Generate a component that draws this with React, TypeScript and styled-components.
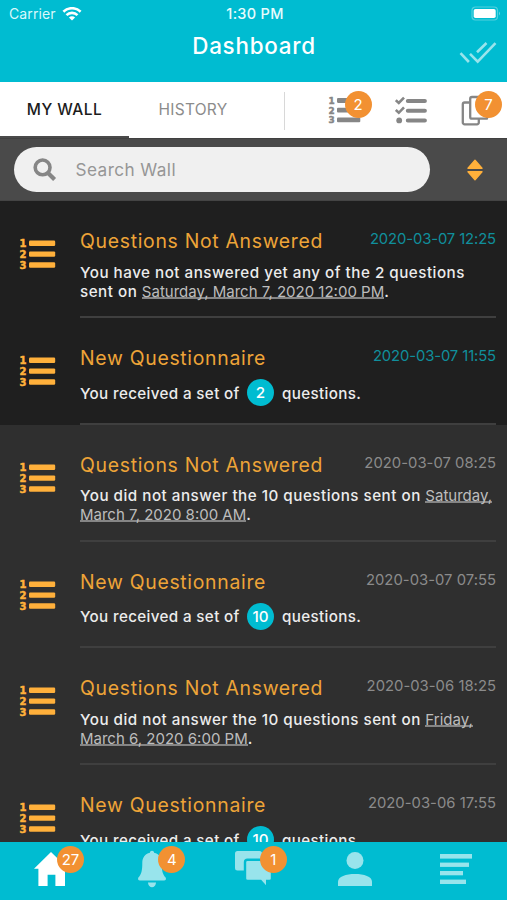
import React from "react";
import styled, { createGlobalStyle } from "styled-components";

const CYAN = "#00bcd1";
const AMBER = "#ffb03b";
const PALE = "#98e4ec";

const GlobalStyle = createGlobalStyle`
  * { box-sizing: border-box; }
  body { margin: 0; background: #2f2f2f; font-family: Inter, "Liberation Sans", sans-serif; }
`;

const Screen = styled.div`
  width: 507px;
  height: 900px;
  display: flex;
  flex-direction: column;
  overflow: hidden;
  background: #2f2f2f;
`;

const Header = styled.header`
  height: 82px;
  flex: none;
  background: ${CYAN};
  color: #fff;
`;

const StatusBar = styled.div`
  height: 27px;
  display: grid;
  grid-template-columns: 1fr auto 1fr;
  align-items: center;
  padding: 0 6px 0 9px;
`;

const Carrier = styled.div`
  display: flex;
  align-items: center;
  gap: 6px;
  font-size: 14px;
  letter-spacing: 0.1px;
  color: #d9f8fb;
`;

const Clock = styled.div`
  font-size: 14.5px;
  font-weight: 500;
  letter-spacing: 0.3px;
  color: #e8fbfd;
`;

const BatterySlot = styled.div`
  display: flex;
  justify-content: flex-end;
`;

const TitleBar = styled.div`
  height: 55px;
  display: grid;
  grid-template-columns: 1fr auto 1fr;
  padding: 0 10px;
`;

const Title = styled.h1`
  grid-column: 2;
  margin: 4px 0 0 1px;
  font-size: 22.4px;
  line-height: 30px;
  font-weight: 500;
  letter-spacing: 0.75px;
`;

const ReadAll = styled.div`
  justify-self: end;
  padding-top: 14px;
`;

const Tabs = styled.nav`
  height: 56px;
  flex: none;
  display: flex;
  align-items: stretch;
  background: #fff;
`;

const Tab = styled.div<{ $active?: boolean }>`
  width: ${(p) => (p.$active ? 129 : 128)}px;
  display: flex;
  align-items: center;
  justify-content: center;
  border-bottom: 2px solid ${(p) => (p.$active ? "#4a4a4a" : "transparent")};
  padding-top: 1px;
  font-size: 15.5px;
  font-weight: ${(p) => (p.$active ? 500 : 400)};
  letter-spacing: ${(p) => (p.$active ? 0.45 : 0.25)}px;
  color: ${(p) => (p.$active ? "#1c1c1c" : "#8c8c8c")};
`;

const TabDivider = styled.div`
  width: 1px;
  height: 38px;
  margin: 10px 44px 0 27px;
  background: #d8d8d8;
`;

const Filters = styled.div`
  display: flex;
  gap: 34px;
  padding-top: 13px;
`;

const IconSlot = styled.div`
  position: relative;
  width: 32px;
  height: 32px;
`;

const Badge = styled.span<{ $left: number; $top: number }>`
  position: absolute;
  left: ${(p) => p.$left}px;
  top: ${(p) => p.$top}px;
  width: 27px;
  height: 27px;
  border-radius: 50%;
  display: flex;
  align-items: center;
  justify-content: center;
  background: #f29132;
  color: #fff;
  font-size: 15px;
`;

const SearchBar = styled.div`
  height: 63px;
  flex: none;
  display: flex;
  align-items: center;
  justify-content: space-between;
  padding: 0 24px 0 14px;
  border-top: 1px solid #404040;
  border-bottom: 1px solid #444;
  background: #4a4a4a;
`;

const SearchField = styled.div`
  width: 416px;
  height: 45px;
  border-radius: 23px;
  display: flex;
  align-items: center;
  gap: 18.5px;
  padding-left: 19px;
  background: #f0f0f0;
  color: #969696;
  font-size: 17.2px;
  letter-spacing: 0.42px;
`;

const Feed = styled.main`
  flex: 1;
  min-height: 0;
  overflow: hidden;
`;

const Entry = styled.article<{ $unread: boolean; $tall: boolean }>`
  height: ${(p) => (p.$tall ? 117.2 : 106.4)}px;
  display: flex;
  padding: 0 11px 0 20px;
  background: ${(p) => (p.$unread ? "#1f1f1f" : "#2f2f2f")};
`;

const EntryIcon = styled.div`
  width: 60px;
  flex: none;
  padding-top: 36px;
`;

const EntryContent = styled.div`
  flex: 1;
  min-width: 0;
  padding-top: 27px;
  border-bottom: 2px solid #3f3f3f;
`;

const EntryHead = styled.div`
  display: flex;
  justify-content: space-between;
  height: 26px;
  white-space: nowrap;
`;

const EntryTitle = styled.h2`
  margin: 0;
  font-size: 19.4px;
  line-height: 26px;
  font-weight: 400;
  letter-spacing: 0.7px;
  color: #eea438;
`;

const EntryDate = styled.time<{ $unread: boolean }>`
  font-size: 14.8px;
  line-height: 22px;
  letter-spacing: ${(p) => (p.$unread ? -0.1 : 0.03)}px;
  color: ${(p) => (p.$unread ? "#108f9c" : "#8b8b8b")};
`;

const EntryText = styled.div`
  margin-top: 8.5px;
  font-size: 15.2px;
  line-height: 19px;
  font-weight: 500;
  letter-spacing: 0.5px;
  color: #ececec;
  white-space: nowrap;
`;

const DateLink = styled.span`
  display: inline-block;
  height: 17px;
  line-height: 19px;
  border-bottom: 2px solid #858585;
  vertical-align: top;
  font-size: 15px;
  font-weight: 400;
  letter-spacing: 0;
  color: #bdbdbd;
`;

const CountLine = styled.div`
  display: flex;
  align-items: center;
  height: 27px;
  margin-top: 8px;
  font-size: 15.2px;
  font-weight: 500;
  letter-spacing: 0.35px;
  color: #ececec;
`;

const Count = styled.span`
  width: 27px;
  height: 27px;
  border-radius: 50%;
  margin: 0 8px 0 7px;
  display: flex;
  align-items: center;
  justify-content: center;
  background: ${CYAN};
  color: #fff;
  font-weight: 500;
  letter-spacing: 0;
`;

const Sentence = styled.span<{ $width?: number }>`
  width: ${(p) => (p.$width ? `${p.$width}px` : "auto")};
  padding-top: 1px;
  white-space: nowrap;
`;

const BottomNav = styled.footer`
  height: 58px;
  flex: none;
  display: grid;
  grid-template-columns: repeat(5, 1fr);
  background: ${CYAN};
`;

const NavItem = styled.div`
  position: relative;
  display: flex;
  justify-content: center;
  padding-top: 8px;
`;

const ListDrawing = styled.svg`
  display: block;
  overflow: visible;
`;

const NumberedList = ({ color, size = 36 }: { color: string; size?: number }) => (
  <ListDrawing width={size} height={size * 0.9} viewBox="0 0 36 32.4">
    {[6.3, 17.2, 28.1].map((y, i) => (
      <g key={y} fill={color}>
        <rect x="9" y={y - 2.8} width="26.2" height="5.4" rx="1.2" />
        <text x="-0.6" y={y + 3.9} fontFamily="DejaVu Sans" fontWeight="700" fontSize="10" stroke={color} strokeWidth="0.5">
          {i + 1}
        </text>
      </g>
    ))}
  </ListDrawing>
);

const CheckList = () => (
  <svg width="32" height="32" viewBox="0 0 32 32" fill="none" stroke="#868686">
    <path d="M12.800 6h17.100M12.800 15.800h17.100M12.800 25.400h17.100" strokeWidth="4" strokeLinecap="round" />
    <path d="M.8 5.200l3 2.800L9 2.600M.8 15l3 2.800L9 12.400" strokeWidth="2.600" />
    <circle cx="4.200" cy="25.400" r="2.900" fill="#868686" stroke="none" />
  </svg>
);

const Copies = () => (
  <svg width="32" height="32" viewBox="0 0 32 32" fill="none" stroke="#868686" strokeWidth="2.300" strokeLinejoin="round">
    <path d="M9 7.500H3.600a1.800 1.800 0 00-1.800 1.800v18.200a1.800 1.800 0 001.800 1.800H16a1.800 1.800 0 001.800-1.800V24" />
    <path d="M11 2h15v21.700H11a1.800 1.800 0 01-1.800-1.800V3.800A1.800 1.800 0 0111 2z" />
  </svg>
);

const Wifi = () => (
  <svg width="20" height="14" viewBox="0 0 20 14" fill="none" stroke="#fff" strokeWidth="2.600">
    <path d="M1.400 4.700a12.300 12.300 0 0117.200 0M4.500 8.100a7.800 7.800 0 0111 0" />
    <path d="M10 13.600L6.900 10.500a4.300 4.300 0 016.200 0z" fill="#fff" stroke="none" />
  </svg>
);

const Battery = () => (
  <svg width="30" height="15" viewBox="0 0 30 15">
    <rect x="1" y="1" width="25.500" height="13" rx="3.500" fill="none" stroke="#52d0de" strokeWidth="1.200" />
    <rect x="2.700" y="2.900" width="22" height="9.200" rx="1.800" fill="#fff" />
    <path d="M28 5.500q2 2 0 4z" fill="#66d7e3" />
  </svg>
);

const DoubleCheck = () => (
  <svg width="38" height="24" viewBox="0 0 38 24" fill="none" stroke={PALE} strokeWidth="2.600">
    <path d="M1.500 12.200l8.400 8.800M11 12.800l7.700 7.900L36.500 2.200M18 11.300l9.500-9.300" />
  </svg>
);

const Magnifier = () => (
  <svg width="24" height="24" viewBox="0 0 24 24" fill="none" stroke="#868686">
    <circle cx="9.600" cy="9.400" r="7.400" strokeWidth="3.600" />
    <path d="M15 15l6.600 6.600" strokeWidth="4.200" />
  </svg>
);

const Sort = () => (
  <svg width="16" height="22" viewBox="0 0 16 22" fill={AMBER} stroke={AMBER} strokeLinejoin="round">
    <path d="M8 1.200L15 9.200H1zM8 20.800L15 12.800H1z" strokeWidth="1.400" />
  </svg>
);

const Home = () => (
  <svg width="34" height="36" viewBox="0 0 34 36" fill="#fff">
    <path d="M17 2L0 18.800h4.400V36h9.200V24.800h7.800V36H31V18.600h3z" />
  </svg>
);

const Bell = () => (
  <svg width="30" height="38" viewBox="0 0 30 38" fill={PALE}>
    <path d="M15 .8c1.200 0 2 .8 2.100 2 4.900 1.200 7.600 5 7.600 10 0 8 .8 11.500 4.100 15q.7 2.700-1.700 2.700H2.900q-2.400 0-1.700-2.700c3.300-3.500 4.100-7 4.100-15 0-5 2.700-8.800 7.600-10 .1-1.200.9-2 2.100-2zM10.900 32.500h8.200q-.8 4.700-4.100 4.700t-4.100-4.700z" />
  </svg>
);

const Chats = () => (
  <svg width="38" height="38" viewBox="0 0 38 38">
    <path d="M3.500 1h22q2.500 0 2.500 2.500v17H3.500q-2.500 0-2.500-2.500V3.500Q1 1 3.500 1z" fill={PALE} />
    <path d="M13.500 9.800h22q2.500 0 2.500 2.500v16.200q0 2.500-2.500 2.500h-2.300v7.200l-6.600-7.200H13.500q-2.500 0-2.500-2.500V12.300q0-2.500 2.500-2.500z" fill={PALE} stroke={CYAN} strokeWidth="2.400" />
  </svg>
);

const Person = () => (
  <svg width="34" height="36" viewBox="0 0 34 36" fill={PALE}>
    <circle cx="17" cy="10.600" r="8.500" />
    <path d="M0 36v-4.300C0 26.500 8 24 17 24s17 2.500 17 7.700V36z" />
  </svg>
);

const TextLines = () => (
  <svg width="32" height="36" viewBox="0 0 32 36" fill={PALE}>
    <rect y="4" width="32" height="4.600" />
    <rect y="12.600" width="29" height="4.300" />
    <rect y="21" width="23" height="4.300" />
    <rect y="29.600" width="26" height="4.400" />
  </svg>
);

type Item = {
  date: string;
  unread?: boolean;
  count?: number;
  lead?: string;
  link?: string;
  secondLead?: string;
  secondLink?: string;
};

const items: Item[] = [
  { date: "2020-03-07 12:25", unread: true, lead: "You have not answered yet any of the 2 questions", secondLead: "sent on ", secondLink: "Saturday, March 7, 2020 12:00 PM" },
  { date: "2020-03-07 11:55", unread: true, count: 2 },
  { date: "2020-03-07 08:25", lead: "You did not answer the 10 questions sent on ", link: "Saturday,", secondLink: "March 7, 2020 8:00 AM" },
  { date: "2020-03-07 07:55", count: 10 },
  { date: "2020-03-06 18:25", lead: "You did not answer the 10 questions sent on ", link: "Friday,", secondLink: "March 6, 2020 6:00 PM" },
  { date: "2020-03-06 17:55", count: 10 },
];

const WallEntry = ({ item }: { item: Item }) => (
  <Entry $unread={!!item.unread} $tall={!item.count}>
    <EntryIcon>
      <NumberedList color={AMBER} />
    </EntryIcon>
    <EntryContent>
      <EntryHead>
        <EntryTitle>{item.count ? "New Questionnaire" : "Questions Not Answered"}</EntryTitle>
        <EntryDate $unread={!!item.unread}>{item.date}</EntryDate>
      </EntryHead>
      {item.count ? (
        <CountLine>
          <Sentence $width={160}>You received a set of</Sentence>
          <Count>{item.count}</Count>
          <Sentence>questions.</Sentence>
        </CountLine>
      ) : (
        <EntryText>
          {item.lead}
          {item.link && <DateLink>{item.link}</DateLink>}
          <br />
          {item.secondLead}
          <DateLink>{item.secondLink}</DateLink>.
        </EntryText>
      )}
    </EntryContent>
  </Entry>
);

export default function App() {
  return (
    <>
      <GlobalStyle />
      <Screen>
        <Header>
          <StatusBar>
            <Carrier>
              Carrier
              <Wifi />
            </Carrier>
            <Clock>1:30 PM</Clock>
            <BatterySlot>
              <Battery />
            </BatterySlot>
          </StatusBar>
          <TitleBar>
            <Title>Dashboard</Title>
            <ReadAll>
              <DoubleCheck />
            </ReadAll>
          </TitleBar>
        </Header>
        <Tabs>
          <Tab $active>MY WALL</Tab>
          <Tab>HISTORY</Tab>
          <TabDivider />
          <Filters>
            <IconSlot>
              <NumberedList color="#868686" size={32} />
              <Badge $left={15.5} $top={-4}>2</Badge>
            </IconSlot>
            <IconSlot>
              <CheckList />
            </IconSlot>
            <IconSlot>
              <Copies />
              <Badge $left={14} $top={-4}>7</Badge>
            </IconSlot>
          </Filters>
        </Tabs>
        <SearchBar>
          <SearchField>
            <Magnifier />
            Search Wall
          </SearchField>
          <Sort />
        </SearchBar>
        <Feed>
          {items.map((item) => (
            <WallEntry key={item.date} item={item} />
          ))}
        </Feed>
        <BottomNav>
          <NavItem>
            <Home />
            <Badge $left={57} $top={3.5}>27</Badge>
          </NavItem>
          <NavItem>
            <Bell />
            <Badge $left={57} $top={3.5}>4</Badge>
          </NavItem>
          <NavItem>
            <Chats />
            <Badge $left={57} $top={3.5}>1</Badge>
          </NavItem>
          <NavItem>
            <Person />
          </NavItem>
          <NavItem>
            <TextLines />
          </NavItem>
        </BottomNav>
      </Screen>
    </>
  );
}
